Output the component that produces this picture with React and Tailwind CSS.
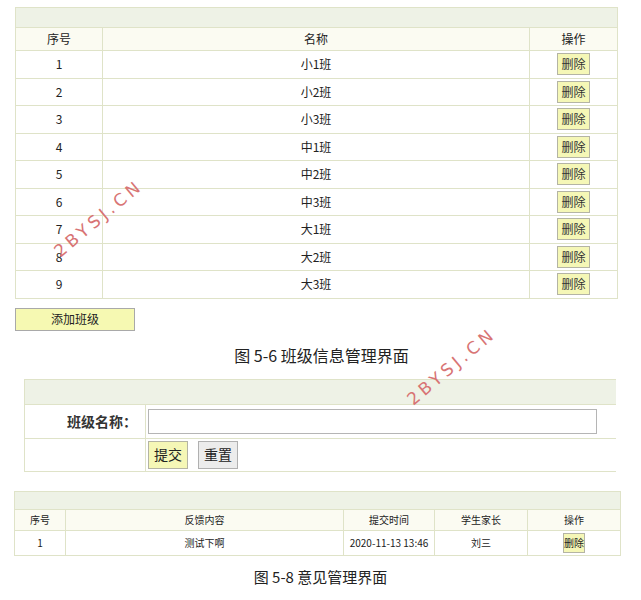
import React from "react";

const classes = [
  { id: 1, name: "小1班" },
  { id: 2, name: "小2班" },
  { id: 3, name: "小3班" },
  { id: 4, name: "中1班" },
  { id: 5, name: "中2班" },
  { id: 6, name: "中3班" },
  { id: 7, name: "大1班" },
  { id: 8, name: "大2班" },
  { id: 9, name: "大3班" },
];

const font = { fontFamily: '"Noto Sans CJK SC", "Noto Sans", sans-serif' };

function Watermark({ className }) {
  return (
    <div
      className={`pointer-events-none absolute text-[17px] font-medium tracking-[4px] text-[#d87474] -rotate-[40deg] ${className}`}
      style={{ fontFamily: '"DejaVu Sans", sans-serif' }}
    >
      2BYSJ.CN
    </div>
  );
}

export default function App() {
  return (
    <div className="relative w-[641px] h-[600px] bg-white text-[#222]" style={font}>
      {/* ---------------- CLASS TABLE ---------------- */}
      <div className="pt-[7px] pl-[15px]">
        <table className="w-[603px] border-collapse text-[12px]">
          <thead>
            <tr>
              <td colSpan={3} className="h-[20px] border border-[#dfe3c8] bg-[#eef2e6]"></td>
            </tr>
            <tr className="bg-[#fbfbf2]">
              <th className="w-[87px] h-[23px] border border-[#dfe3c8] font-normal">序号</th>
              <th className="border border-[#dfe3c8] font-normal">名称</th>
              <th className="w-[88px] border border-[#dfe3c8] font-normal">操作</th>
            </tr>
          </thead>
          <tbody>
            {classes.map((c) => (
              <tr key={c.id}>
                <td className="h-[27.5px] border border-[#dfe3c8] text-center">{c.id}</td>
                <td className="border border-[#dfe3c8] text-center">{c.name}</td>
                <td className="border border-[#dfe3c8] text-center">
                  <button className="inline-flex h-[22px] w-[33px] items-center justify-center border border-[#b4b4a4] bg-[#f5f7b6] text-[12px] text-[#333] align-middle">
                    删除
                  </button>
                </td>
              </tr>
            ))}
          </tbody>
        </table>

        <button className="mt-[9px] h-[23px] w-[120px] border border-[#a9a9a9] bg-[#f6f9b2] text-[12px]">
          添加班级
        </button>
      </div>

      <p className="mt-[12px] text-center text-[16px] pl-[2px]">图 5-6 班级信息管理界面</p>

      {/* ---------------- FORM ---------------- */}
      <div className="mt-[12px] pl-[24px]">
        <table className="w-[592px] border-collapse text-[14px]">
          <tbody>
            <tr>
              <td colSpan={2} className="h-[25px] border-y border-l border-[#dfe3c8] bg-[#eef2e6]"></td>
            </tr>
            <tr>
              <td className="w-[121px] h-[34px] border-y border-l border-[#dfe3c8] pr-[8px] text-right font-bold text-[#333]">
                班级名称：
              </td>
              <td className="border-y border-l border-[#dfe3c8] pl-[2px]">
                <input className="block h-[25px] w-[449px] border border-[#b5b5b5] bg-white outline-none" />
              </td>
            </tr>
            <tr>
              <td className="h-[33px] border-y border-l border-[#dfe3c8]"></td>
              <td className="border-y border-l border-[#dfe3c8] pl-[2px]">
                <div className="flex gap-[10px]">
                  <button className="h-[28px] w-[40px] border border-[#b4b4a4] bg-[#f5f7b6] text-[14px]">提交</button>
                  <button className="h-[28px] w-[40px] border border-[#b0b0b0] bg-[#ececec] text-[14px]">重置</button>
                </div>
              </td>
            </tr>
          </tbody>
        </table>
      </div>

      {/* ---------------- FEEDBACK TABLE ---------------- */}
      <div className="mt-[19px] pl-[14px]">
        <table className="w-[607px] border-collapse text-[10px]">
          <thead>
            <tr>
              <td colSpan={5} className="h-[18px] border border-[#dfe3c8] bg-[#eef2e6]"></td>
            </tr>
            <tr className="bg-[#fbfbf2]">
              <th className="w-[51px] h-[21px] border border-[#dfe3c8] font-normal">序号</th>
              <th className="border border-[#dfe3c8] font-normal">反馈内容</th>
              <th className="w-[91px] border border-[#dfe3c8] font-normal">提交时间</th>
              <th className="w-[93px] border border-[#dfe3c8] font-normal">学生家长</th>
              <th className="w-[93px] border border-[#dfe3c8] font-normal">操作</th>
            </tr>
          </thead>
          <tbody>
            <tr>
              <td className="h-[25px] border border-[#dfe3c8] text-center">1</td>
              <td className="border border-[#dfe3c8] text-center">测试下啊</td>
              <td className="border border-[#dfe3c8] text-center">2020-11-13 13:46</td>
              <td className="border border-[#dfe3c8] text-center">刘三</td>
              <td className="border border-[#dfe3c8] text-center">
                <button className="inline-flex h-[20px] w-[22px] items-center justify-center border border-[#b4b4a4] bg-[#f5f7b6] text-[10px] align-middle">
                  删除
                </button>
              </td>
            </tr>
          </tbody>
        </table>
      </div>

      <p className="mt-[10px] text-center text-[15px]">图 5-8 意见管理界面</p>

      <Watermark className="left-[44px] top-[206px]" />
      <Watermark className="left-[397px] top-[354px]" />
    </div>
  );
}
